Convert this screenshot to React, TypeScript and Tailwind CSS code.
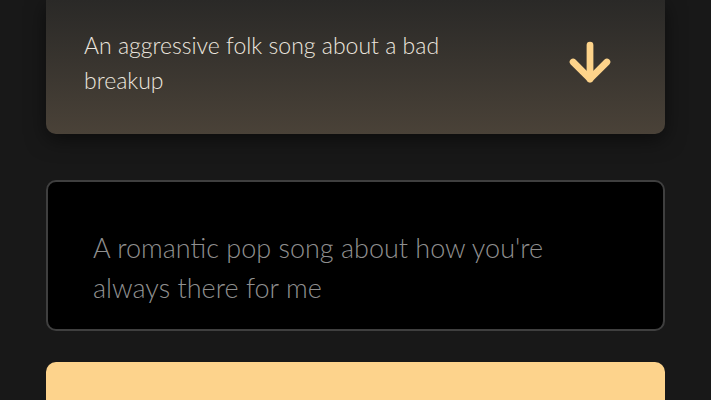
import { ArrowDown } from 'lucide-react';

export default function App() {
  return (
    <div className="w-[711px] h-[400px] overflow-hidden bg-[#181818] font-['Lato',sans-serif]">
      <div className="mx-[46px] flex flex-col gap-[46px]">
        {/* Selected prompt */}
        <div className="h-[134px] rounded-b-[10px] bg-gradient-to-b from-[#2a2927] to-[#4a4238] shadow-[0_6px_20px_rgba(0,0,0,0.5)] flex items-center justify-between pl-[38px] pr-[46px]">
          <p className="text-[23px] leading-[35px] font-light text-[#ece6df] w-[420px] -mt-[8px]">
            An aggressive folk song about a bad breakup
          </p>
          <ArrowDown className="w-[58px] h-[58px] text-[#fdd38a] -mt-[10px]" strokeWidth={2.8} />
        </div>

        {/* Option */}
        <div className="h-[151px] rounded-[10px] bg-black border-2 border-[#3f3f3f] flex items-center pl-[45px] pr-[40px]">
          <p className="text-[27px] leading-[40px] font-light text-[#8f8f8f] w-[500px] mt-[24px]">
            A romantic pop song about how you're always there for me
          </p>
        </div>

        {/* Action */}
        <div className="h-[80px] -mt-[15px] rounded-[10px] bg-[#fdd38c]" />
      </div>
    </div>
  );
}
